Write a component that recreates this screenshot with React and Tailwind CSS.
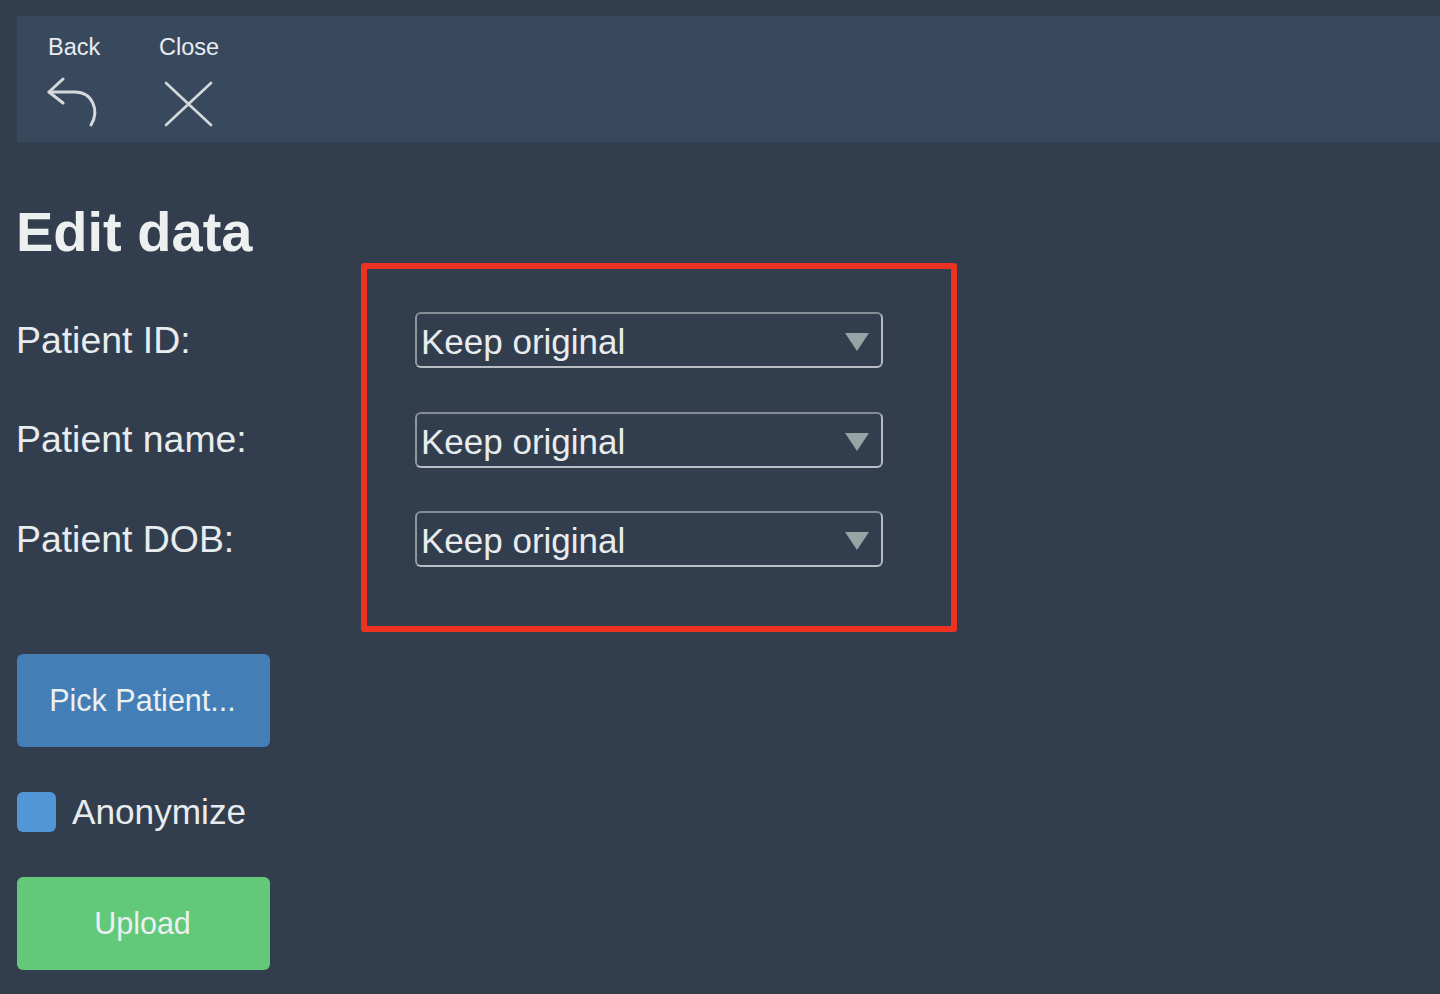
export default function App() {
  const rows = ["Patient ID:", "Patient name:", "Patient DOB:"];
  return (
    <div className="relative h-[994px] w-[1440px] overflow-hidden bg-[#323e4d] pl-[17px] pt-4 font-['Liberation_Sans',Arial,sans-serif] text-[#e8ecef]">
      <div className="flex h-[126px] gap-[59px] bg-[#38495e] pl-[31px] pt-[14px]">
        <div className="flex w-[52px] flex-col">
          <span className="text-[23.5px] leading-[34px]">Back</span>
          <svg className="mt-[13px] -ml-[1px] h-[54px] w-[54px]" viewBox="0 0 54 54" fill="none" stroke="#d5d9dc" strokeWidth="3" strokeLinecap="round" strokeLinejoin="round">
            <path d="M16 2 L2 15 L16 26" />
            <path d="M2 15 H28 C45 15 53 33 44 48" />
          </svg>
        </div>
        <div className="flex w-[60px] flex-col">
          <span className="text-[23.5px] leading-[34px]">Close</span>
          <svg className="mt-[17px] ml-[5px] h-[48px] w-[50px]" viewBox="0 0 50 48" fill="none" stroke="#d5d9dc" strokeWidth="2.6" strokeLinecap="round">
            <path d="M2 2 L47 44 M47 2 L2 44" />
          </svg>
        </div>
      </div>

      <h1 className="mt-[57px] -ml-[1px] text-[56px] font-bold leading-[66px] text-[#ecf0f1]">Edit data</h1>

      <div className="mt-[47px] grid w-[866px] grid-cols-[398px_468px] gap-y-[43.5px]">
        {rows.map((r) => (
          <div key={r} className="contents">
            <label className="-ml-[1px] flex h-[56px] items-center text-[37.4px] text-[#e8ecef]">{r}</label>
            <div className="relative h-[56px]">
              <select className="h-full w-full appearance-none rounded-[6px] border-2 border-t-[#858d95] border-l-[#8f979e] border-r-[#b4bac0] border-b-[#b8bec4] bg-transparent pl-[4px] pt-[2px] text-[35px] text-[#e8ecef] outline-none">
                <option>Keep original</option>
              </select>
              <svg className="pointer-events-none absolute right-[14px] top-[21px] h-[18px] w-[24px]" viewBox="0 0 24 18">
                <path d="M0 0 H24 L12 18 Z" fill="#95a5a6" />
              </svg>
            </div>
          </div>
        ))}
      </div>

      <button className="mt-[87px] block h-[93px] w-[253px] rounded-[6px] bg-[#437fb6] pr-[2px] text-[30.5px] text-[#ecf0f1]">
        Pick Patient...
      </button>

      <label className="mt-[45px] flex h-[40px] items-center gap-[16px] text-[35.2px] text-[#e8ecef]">
        <span className="h-[40px] w-[39px] rounded-[6px] bg-[#5197d8]" />
        Anonymize
      </label>

      <button className="mt-[45px] block h-[93px] w-[253px] rounded-[6px] bg-[#62c97a] pr-[2px] text-[30.5px] text-[#ecf0f1]">
        Upload
      </button>

      <div className="pointer-events-none absolute left-[361px] top-[263px] h-[369px] w-[596px] rounded-[3px] border-[6px] border-[#ee3222]" />
    </div>
  );
}
